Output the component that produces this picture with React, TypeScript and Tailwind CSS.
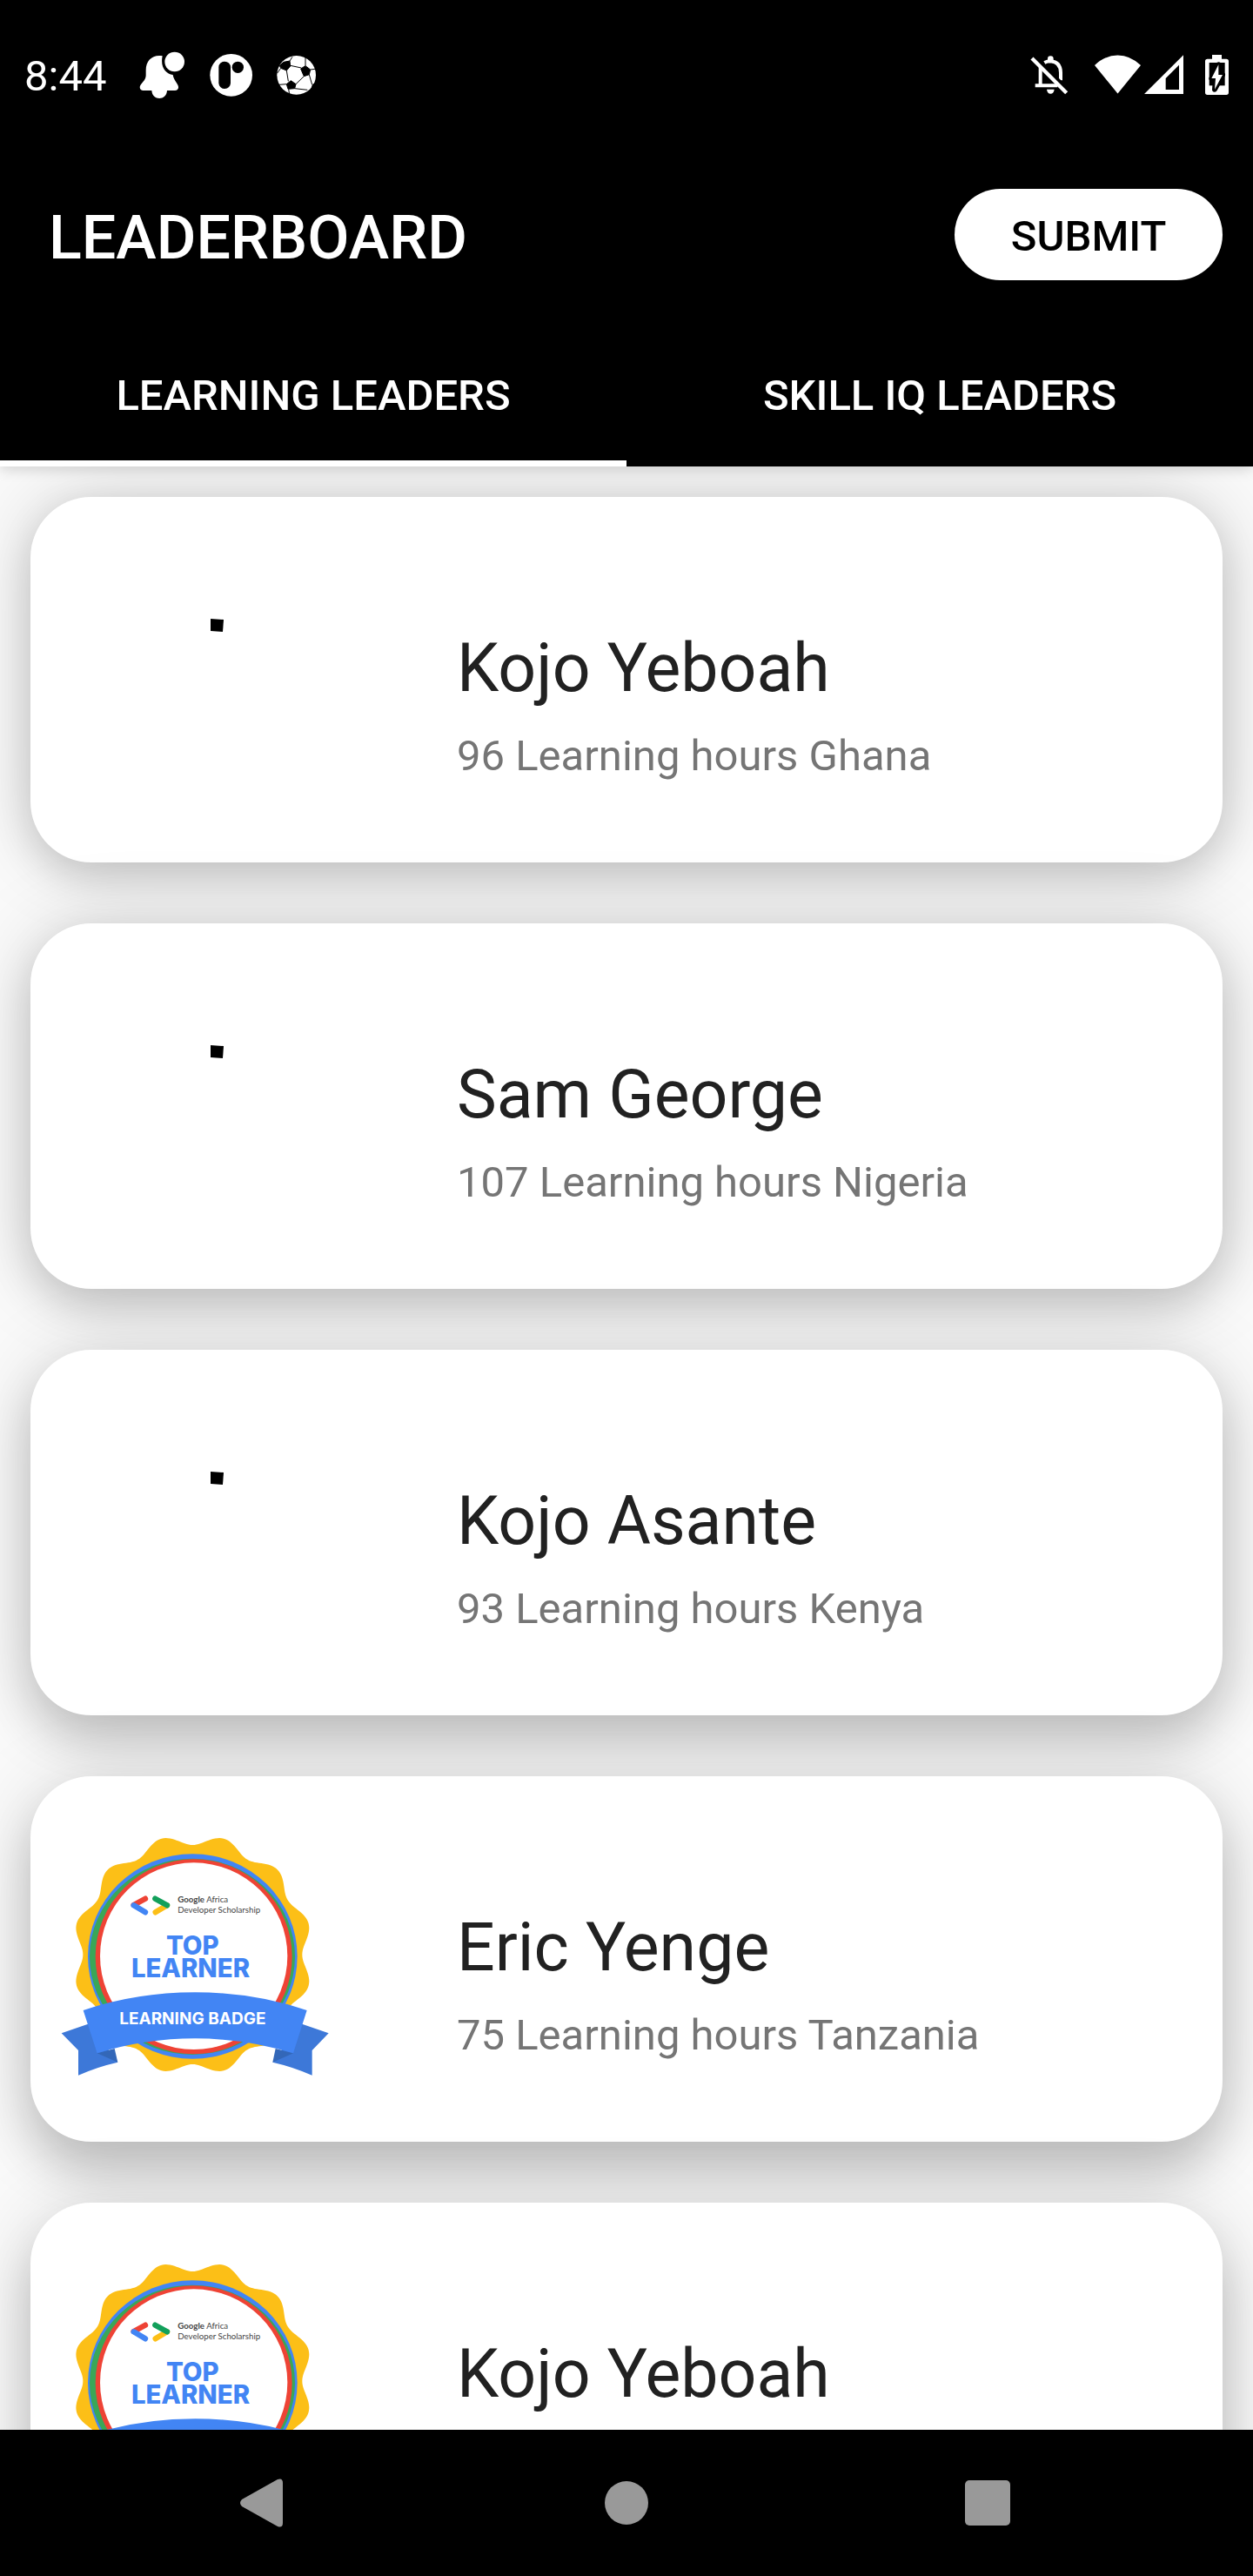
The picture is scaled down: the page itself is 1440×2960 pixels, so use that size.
import React from "react";

const leaders = [
  {
    name: "Kojo Yeboah",
    detail: "96 Learning hours Ghana",
    badge: false,
    shadow: "shadow-[0_16px_44px_rgba(0,0,0,0.14),0_0_90px_rgba(0,0,0,0.17)]",
  },
  {
    name: "Sam George",
    detail: "107 Learning hours Nigeria",
    badge: false,
    shadow: "shadow-[0_20px_48px_rgba(0,0,0,0.15),0_4px_90px_rgba(0,0,0,0.17)]",
  },
  {
    name: "Kojo Asante",
    detail: "93 Learning hours Kenya",
    badge: false,
    shadow: "shadow-[0_28px_52px_rgba(0,0,0,0.16),0_8px_90px_rgba(0,0,0,0.16)]",
  },
  {
    name: "Eric Yenge",
    detail: "75 Learning hours Tanzania",
    badge: true,
    shadow: "shadow-[0_34px_52px_rgba(0,0,0,0.17),0_8px_90px_rgba(0,0,0,0.16)]",
  },
  {
    name: "Kojo Yeboah",
    detail: "",
    badge: true,
    shadow: "shadow-[0_38px_52px_rgba(0,0,0,0.17),0_8px_90px_rgba(0,0,0,0.16)]",
  },
];

function scallop() {
  const cx = 544;
  const cy = 498;
  const lobes = 12;
  const pts: string[] = [];
  for (let i = 0; i < 360; i++) {
    const a = (i / 360) * Math.PI * 2;
    const r = 396 - 18 * Math.cos(lobes * a);
    pts.push(`${(cx + r * Math.cos(a)).toFixed(1)},${(cy + r * Math.sin(a)).toFixed(1)}`);
  }
  return pts.join(" ");
}

const scallopPoints = scallop();

function LearnerBadge() {
  return (
    <svg
      viewBox="90 90 924 825"
      className="h-[275px] w-[308px] [font-optical-sizing:none]"
      role="img"
      aria-label="Top learner badge"
    >
      <polygon points={scallopPoints} fill="#fcbf17" />
      <ellipse cx="544" cy="504" rx="361" ry="353" fill="#4285f4" />
      <ellipse cx="543" cy="505" rx="354" ry="338" fill="#3aa757" />
      <ellipse cx="548" cy="505" rx="339" ry="336" fill="#ee4335" />
      <ellipse cx="548" cy="503" rx="323" ry="322" fill="#fff" />
      <g strokeWidth="19" strokeLinecap="round">
        <path d="M341 327L381 305" stroke="#ee4335" />
        <path d="M341 328L381 352" stroke="#4285f4" />
        <path d="M456 328L416 352" stroke="#fcbf17" />
        <path d="M415 305L456 328" stroke="#12a05b" />
      </g>
      <g fontFamily="Lato, sans-serif" fontSize="29" fill="#444">
        <text x="493" y="319"><tspan fontWeight="700">Google</tspan> Africa</text>
        <text x="493" y="354">Developer Scholarship</text>
      </g>
      <text fontFamily="Inter, sans-serif" fontWeight="800" textAnchor="middle" fontSize="88" fill="#4285f4">
        <tspan x="544" y="498">TOP</tspan>
        <tspan x="537" y="577">LEARNER</tspan>
      </text>
      <path d="M92 769L188 736L286 869Q215 885 150 914V828Z" fill="#3d78d8" />
      <path d="M1013 769L917 736L820 869Q890 885 956 914V828Z" fill="#3d78d8" />
      <path d="M215 838L275 822L286 869Z" fill="#3367b8" />
      <path d="M891 838L830 822L820 869Z" fill="#3367b8" />
      <path d="M167 690Q350 628 553 628Q755 628 938 690L891 838Q725 787 553 787Q380 787 215 838Z" fill="#4285f4" />
      <text x="544" y="738" fontFamily="Inter, sans-serif" fontWeight="700" textAnchor="middle" fontSize="57" fill="#fff">
        LEARNING BADGE
      </text>
    </svg>
  );
}

function StatusBar() {
  return (
    <div className="flex h-[172px] items-center pl-7 pr-7 text-white">
      <span className="mr-[38px] pt-1 text-[49px]">8:44</span>
      <div className="flex items-center gap-7">
        <svg viewBox="483 57 159 165" className="h-[55px] w-[53px]" fill="currentColor" aria-hidden="true">
          <path d="M552 72C524 72 506 92 506 122V140C506 158 487 166 485 180C485 188 490 192 497 192H526C528 228 577 228 579 192H606C614 192 619 187 618 179C616 166 602 158 599 138C575 134 555 112 563 73C560 72 556 72 552 72Z" />
          <circle cx="605" cy="93" r="34" />
        </svg>
        <svg viewBox="719 66 147 147" className="h-[49px] w-[49px]" aria-hidden="true">
          <circle cx="793" cy="139" r="73" fill="currentColor" />
          <rect x="750" y="92" width="41" height="94" rx="20" fill="#000" />
          <circle cx="816" cy="112" r="20" fill="#000" />
        </svg>
        <svg viewBox="956 72 135 135" className="h-[45px] w-[45px]" aria-hidden="true">
          <circle cx="1024" cy="139" r="67" fill="currentColor" />
          <g fill="#000" stroke="#000" strokeWidth="3" strokeLinejoin="round">
            <path d="M970 115L966 106L980 94L1001 90L1003 108L990 123Z" />
            <path d="M1039 117L1055 107L1072 120L1068 137L1050 143Z" />
            <path d="M990 170L1005 158L1022 170L1018 185L995 187Z" />
            <path d="M1094 162L1080 172L1076 186L1092 190Z" />
            <path
              d="M1001 90L1010 76M1003 106L1041 114M1055 107V76M1072 120L1088 118M990 123L996 160M970 115L958 132M1050 143L1022 170M1068 137L1078 172M1018 185L1062 190M990 170L964 172M997 187L1000 206"
              fill="none"
            />
          </g>
        </svg>
      </div>
      <div className="ml-auto flex items-center">
        <svg viewBox="132 69 132 138" className="h-[46px] w-[44px]" fill="none" stroke="currentColor" aria-hidden="true">
          <path d="M181 96Q190 91 202 91Q236 93 237 130V157" strokeWidth="12" />
          <path d="M167 112V175M149 175H226" strokeWidth="12" />
          <path d="M192 90V83A10 10 0 0 1 212 83V90Z M189 188H215Q213 203 202 203Q191 203 189 188Z" fill="currentColor" stroke="none" />
          <path d="M147 73L264 190" stroke="#000" strokeWidth="10" />
          <path d="M138 81L257 200" strokeWidth="13" />
        </svg>
        <svg viewBox="354 69 160 138" className="ml-[30px] h-[46px] w-[53px]" fill="currentColor" aria-hidden="true">
          <path d="M354 105Q390 70 434 70Q478 70 514 105L434 203Z" />
        </svg>
        <svg viewBox="525 69 135 138" className="ml-1 h-[46px] w-[45px]" fill="currentColor" fillRule="evenodd" aria-hidden="true">
          <path d="M525 204L660 70V204ZM599 150V189H645V104Z" />
        </svg>
        <svg viewBox="735 69 81 138" className="ml-[25px] h-[46px] w-[27px]" fill="currentColor" aria-hidden="true">
          <path d="M759 69H792V83H808Q816 83 816 91V199Q816 207 808 207H743Q735 207 735 199V91Q735 83 743 83H759Z" />
          <path d="M749 96H803V175H749Z" fill="#000" />
          <path d="M781 103L757 150H771L768 188L795 138H781Z" stroke="#000" strokeWidth="18" strokeLinejoin="round" />
          <path d="M781 103L757 150H771L768 188L795 138H781Z" />
        </svg>
      </div>
    </div>
  );
}

export default function App() {
  return (
    <div className="flex h-screen flex-col overflow-hidden bg-[#fafafa] font-[Roboto,sans-serif]">
      <header className="relative z-10 shrink-0 bg-black shadow-[0_4px_14px_rgba(0,0,0,0.15)]">
        <StatusBar />
        <div className="flex h-[196px] items-start justify-between pl-14 pr-[35px] pt-[45px]">
          <h1 className="text-[70px] font-medium leading-[112px] text-white">LEADERBOARD</h1>
          <button type="button" className="h-[105px] w-[308px] rounded-full bg-white pt-1 text-[49px] font-medium leading-none text-black">
            SUBMIT
          </button>
        </div>
        <div role="tablist" className="grid h-[168px] grid-cols-2 text-[49px] font-medium text-white">
          <button type="button" role="tab" aria-selected="true" className="border-b-[7px] border-white pt-3">
            LEARNING LEADERS
          </button>
          <button type="button" role="tab" aria-selected="false" className="border-b-[7px] border-black pt-3">
            SKILL IQ LEADERS
          </button>
        </div>
      </header>

      <main className="min-h-0 flex-1 overflow-hidden">
        <ul className="flex flex-col gap-[70px] p-[35px]">
          {leaders.map((leader, i) => (
            <li key={i} className={`flex h-[420px] shrink-0 rounded-[70px] bg-white pl-[35px] ${leader.shadow}`}>
              <div className="w-[455px] shrink-0 pt-[69px]">
                {leader.badge ? (
                  <LearnerBadge />
                ) : (
                  <svg viewBox="0 0 308 275" className="h-[275px] w-[308px]" aria-hidden="true">
                    <path d="M172 71L187 72L186 86L172 85Z" fill="#000" />
                  </svg>
                )}
              </div>
              <div className="pt-[152px]">
                <h2 className="text-[77px] leading-[90px] text-[#212121]">{leader.name}</h2>
                {leader.detail && <p className="mt-[27px] text-[49px] leading-[58px] text-[#757575]">{leader.detail}</p>}
              </div>
            </li>
          ))}
        </ul>
      </main>

      <nav className="relative z-10 grid h-[168px] shrink-0 grid-cols-[1fr_240px_1fr] items-center bg-black px-[245px]" aria-label="System navigation">
        <button type="button" aria-label="Back" className="justify-self-start pl-[31px]">
          <svg viewBox="0 0 49 56" className="h-14 w-[49px]" fill="#999">
            <path d="M2 24Q-2 28 2 32L43 55Q49 57 49 51V5Q49 -1 43 1Z" />
          </svg>
        </button>
        <button type="button" aria-label="Home" className="size-[50px] justify-self-center rounded-full bg-[#999]" />
        <button type="button" aria-label="Recent apps" className="mr-[34px] size-[52px] justify-self-end rounded-[5px] bg-[#999]" />
      </nav>
    </div>
  );
}
